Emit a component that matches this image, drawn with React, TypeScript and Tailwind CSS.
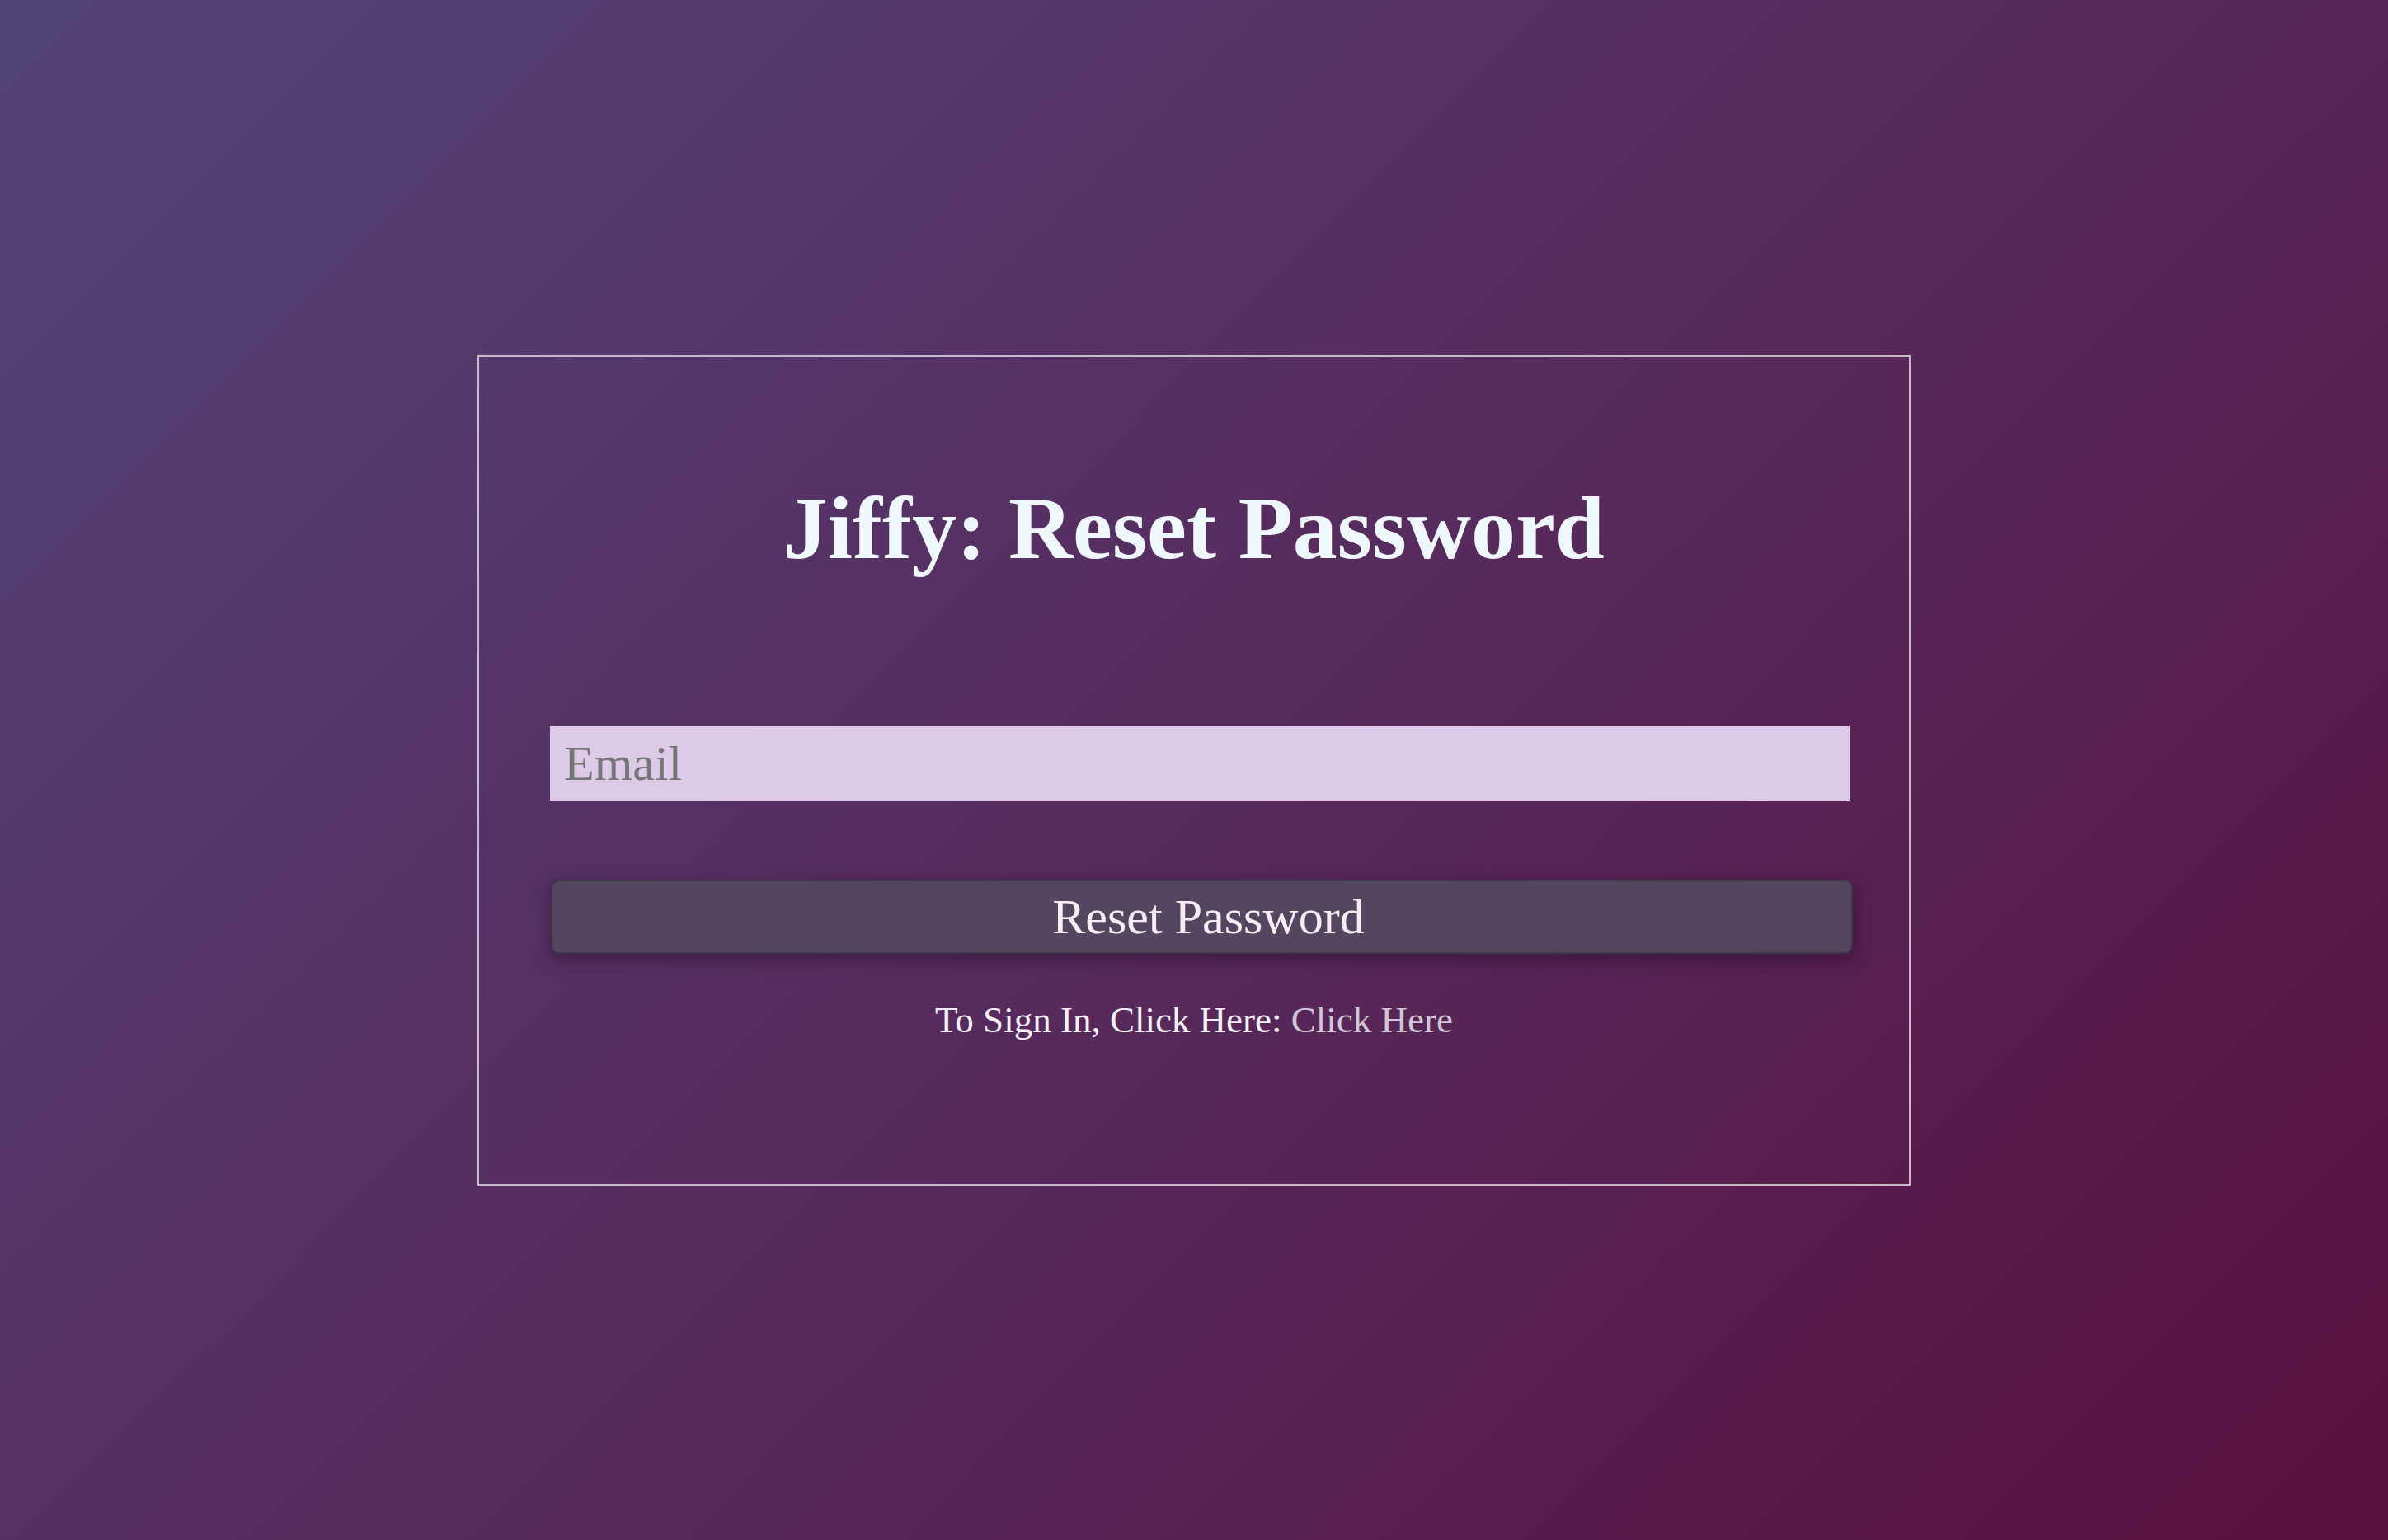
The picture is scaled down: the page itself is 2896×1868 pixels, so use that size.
import React from 'react';

const serif = { fontFamily: '"Liberation Serif", "Times New Roman", serif' };

export default function App() {
  return (
    <div
      className="flex min-h-screen w-full items-center justify-center bg-[linear-gradient(135deg,#524479_0%,#572b5e_50%,#59113e_100%)]"
      style={serif}
    >
      <div className="flex w-[1738px] flex-col border-2 border-[#c6bcc8] pt-[148px] pb-[174px]">
        <h1 className="text-center text-[108px] font-bold leading-[120px] text-[#f0f8ff]">
          Jiffy: Reset Password
        </h1>

        <input
          type="email"
          placeholder="Email"
          className="mt-[180px] ml-[86px] h-[90px] w-[1576px] border-0 bg-[#dccae6] px-[17px] text-[60px] text-[#333] outline-none placeholder:text-[#767676]"
        />

        <button
          type="button"
          className="mt-[96px] ml-[87px] h-[90px] w-[1579px] rounded-[10px] border-2 border-[#40364b] bg-[#54465e] pl-[16px] text-[60px] leading-none text-[#f3eff5] shadow-[0_6px_22px_rgba(20,5,25,0.45)]"
        >
          Reset Password
        </button>

        <p className="mt-[55px] text-center text-[45px] leading-[50px] text-[#f3f1f7]">
          To Sign In, Click Here:{' '}
          <a href="#" className="text-[#cfc7d3]">
            Click Here
          </a>
        </p>
      </div>
    </div>
  );
}
